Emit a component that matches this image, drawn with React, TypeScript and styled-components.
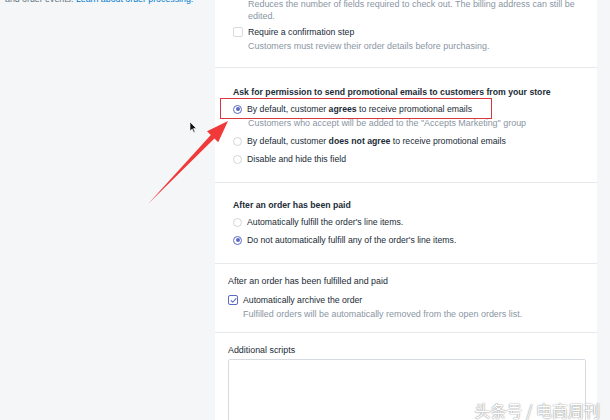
import React from 'react';
import styled, { createGlobalStyle } from 'styled-components';

const GlobalStyle = createGlobalStyle`
    html, body {
        margin: 0;
        padding: 0;
        overflow: hidden;
        background: #f4f6f8;
    }
    body {
        font-family: 'Liberation Sans', Arial, sans-serif;
        font-variant-ligatures: none;
        color: #212b36;
    }
`;

const Page = styled.div`
    position: relative;
    display: flex;
    width: 610px;
    height: 420px;
    overflow: hidden;
    background: #f4f6f8;
`;

const Aside = styled.div`
    width: 215px;
    flex-shrink: 0;
    padding-left: 5px;
    box-sizing: border-box;
`;

const AsideText = styled.p`
    margin: -7px 0 0;
    font-size: 8.8px;
    line-height: 12px;
    color: #637381;
    white-space: nowrap;
`;

const Link = styled.a`
    color: #007ace;
    text-decoration: none;
`;

const Card = styled.div`
    width: 382px;
    flex-shrink: 0;
    background: #ffffff;
    display: flex;
    flex-direction: column;
`;

const Section = styled.section<{ $pt: number; $pb: number; $pl?: number; $mt?: number }>`
    display: flex;
    flex-direction: column;
    padding: ${(p) => p.$pt}px 14px ${(p) => p.$pb}px ${(p) => p.$pl ?? 18}px;
    margin-top: ${(p) => p.$mt ?? 0}px;
    border-bottom: 1px solid #e6e9ec;
    &:last-child {
        border-bottom: none;
    }
`;

const Heading = styled.h3<{ $bold?: boolean }>`
    margin: 0 0 ${(p) => (p.$bold ? 2 : 4)}px;
    font-size: ${(p) => (p.$bold ? 8.7 : 8.9)}px;
    line-height: 14px;
    font-weight: ${(p) => (p.$bold ? 700 : 400)};
    color: #212b36;
`;

const Options = styled.div`
    display: flex;
    flex-direction: column;
    gap: 2px;
`;

const OptionGroup = styled.div`
    display: flex;
    flex-direction: column;
`;

const OptionRow = styled.label`
    display: flex;
    align-items: center;
    gap: 5px;
    height: 16px;
    font-size: 8.7px;
    color: #212b36;
    white-space: nowrap;
    b {
        font-weight: 700;
    }
`;

const Help = styled.div`
    padding-left: 15px;
    font-size: 8.95px;
    line-height: 12px;
    color: #8a96a3;
    margin-bottom: 2px;
    white-space: nowrap;
`;

const Radio = styled.span<{ $on?: boolean }>`
    position: relative;
    width: 9px;
    height: 9px;
    border-radius: 50%;
    flex-shrink: 0;
    box-sizing: border-box;
    border: 1px solid ${(p) => (p.$on ? '#5c6ac4' : '#cfd6dd')};
    background: #fff;
    &::after {
        content: '';
        display: ${(p) => (p.$on ? 'block' : 'none')};
        position: absolute;
        left: 1.5px;
        top: 1.5px;
        width: 4px;
        height: 4px;
        border-radius: 50%;
        background: #5c6ac4;
    }
`;

const Checkbox = styled.span<{ $on?: boolean }>`
    display: flex;
    align-items: center;
    justify-content: center;
    width: 10px;
    height: 10px;
    flex-shrink: 0;
    box-sizing: border-box;
    border-radius: 2px;
    border: 1px solid ${(p) => (p.$on ? '#5c6ac4' : '#d5dbe0')};
    background: #fff;
`;

const ScriptBox = styled.div`
    height: 80px;
    margin-top: -2px;
    margin-right: -3px;
    border: 1px solid #d5dbe0;
    border-radius: 2px;
    background: #fff;
`;

const Highlight = styled.div`
    position: absolute;
    left: 220px;
    top: 98px;
    width: 272px;
    height: 21px;
    box-sizing: border-box;
    border: 1.5px solid #d9363e;
`;

const Overlay = styled.svg`
    position: absolute;
    left: 0;
    top: 0;
    pointer-events: none;
`;

const Watermark = styled.div`
    position: absolute;
    right: 10px;
    bottom: 0;
    font-family: 'Noto Sans CJK SC', sans-serif;
    font-size: 16px;
    line-height: 19px;
    color: #ffffff;
    text-shadow: 0 0 1px rgba(0, 0, 0, 0.5), 0 0 2px rgba(0, 0, 0, 0.25);
    white-space: nowrap;
`;

function Check() {
    return (
        <svg width="7" height="7" viewBox="0 0 8 8">
            <path d="M1.3 4.2 L3.2 6 L6.8 1.8" fill="none" stroke="#5c6ac4" strokeWidth="1.2" strokeLinecap="round" strokeLinejoin="round" />
        </svg>
    );
}

function App() {
    return (
        <Page>
            <GlobalStyle />
            <Aside>
                <AsideText>
                    and order events. <Link>Learn about order processing.</Link>
                </AsideText>
            </Aside>
            <Card>
                <Section $pt={0} $pb={13} $mt={-2}>
                    <Help>
                        Reduces the number of fields required to check out. The billing address can still be
                        <br />
                        edited.
                    </Help>
                    <OptionGroup>
                        <OptionRow>
                            <Checkbox />
                            Require a confirmation step
                        </OptionRow>
                        <Help>Customers must review their order details before purchasing.</Help>
                    </OptionGroup>
                </Section>
                <Section $pt={17} $pb={15}>
                    <Heading $bold>Ask for permission to send promotional emails to customers from your store</Heading>
                    <Options>
                        <OptionGroup>
                            <OptionRow>
                                <Radio $on />
                                <span>
                                    By default, customer <b>agrees</b> to receive promotional emails
                                </span>
                            </OptionRow>
                            <Help>Customers who accept will be added to the "Accepts Marketing" group</Help>
                        </OptionGroup>
                        <OptionRow>
                            <Radio />
                            <span>
                                By default, customer <b>does not agree</b> to receive promotional emails
                            </span>
                        </OptionRow>
                        <OptionRow>
                            <Radio />
                            Disable and hide this field
                        </OptionRow>
                    </Options>
                </Section>
                <Section $pt={15} $pb={15}>
                    <Heading $bold>After an order has been paid</Heading>
                    <Options>
                        <OptionRow>
                            <Radio />
                            Automatically fulfill the order's line items.
                        </OptionRow>
                        <OptionRow>
                            <Radio $on />
                            Do not automatically fulfill any of the order's line items.
                        </OptionRow>
                    </Options>
                </Section>
                <Section $pt={10} $pb={10} $pl={13}>
                    <Heading>After an order has been fulfilled and paid</Heading>
                    <OptionGroup>
                        <OptionRow>
                            <Checkbox $on>
                                <Check />
                            </Checkbox>
                            Automatically archive the order
                        </OptionRow>
                        <Help>Fulfilled orders will be automatically removed from the open orders list.</Help>
                    </OptionGroup>
                </Section>
                <Section $pt={10} $pb={0} $pl={13}>
                    <Heading>Additional scripts</Heading>
                    <ScriptBox />
                </Section>
            </Card>
            <Highlight />
            <Overlay width="610" height="420" viewBox="0 0 610 420">
                {/* annotation arrow */}
                <polygon
                    points="148,204 214.4,138.5 218.2,142.3 228,121 207,131.3 210.8,135.1 148,204"
                    fill="#f2393a"
                />
                {/* mouse cursor */}
                <path
                    d="M190 122 L190 131 L192.2 129 L193.8 132.5 L195 132 L193.5 128.6 L196.3 128.4 Z"
                    fill="#111"
                    stroke="#fff"
                    strokeWidth="0.6"
                />
            </Overlay>
            <Watermark>头条号 / 电商周刊</Watermark>
        </Page>
    );
}

export default App;
